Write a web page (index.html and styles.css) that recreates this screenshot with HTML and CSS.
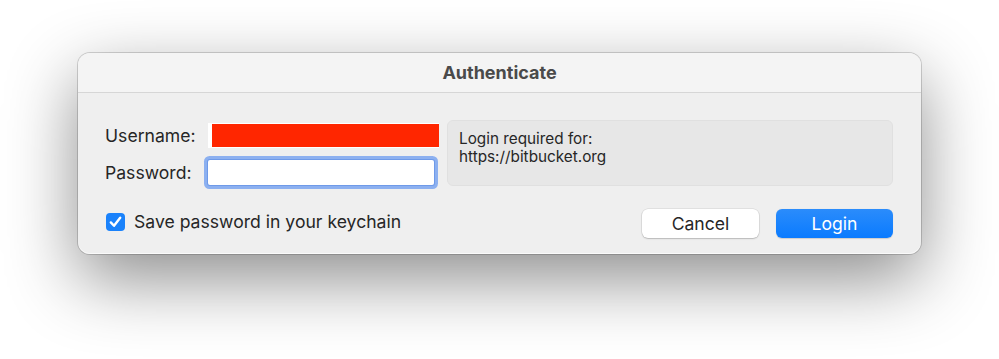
FILE: index.html
```html
<!DOCTYPE html>
<html>
<head>
<meta charset="utf-8">
<link rel="stylesheet" href="styles.css">
</head>
<body>
<div class="window">
  <div class="titlebar">Authenticate</div>
  <div class="content">
    <div class="top">
      <div class="form">
        <label class="label">Username:</label>
        <div class="field username"><div class="redact"></div></div>
        <label class="label">Password:</label>
        <div class="field password"></div>
      </div>
      <div class="info">
        <div>Login required for:</div>
        <div>https://bitbucket.org</div>
      </div>
    </div>
    <div class="bottom">
      <div class="check">
        <span class="box"><svg width="19" height="18" viewBox="0 0 19 18"><path d="M4.8 9.4 L8 12.8 L14.2 4.8" fill="none" stroke="#fff" stroke-width="2.4" stroke-linecap="round" stroke-linejoin="round"/></svg></span>
        <span class="check-text">Save password in your keychain</span>
      </div>
      <div class="buttons">
        <button class="btn cancel">Cancel</button>
        <button class="btn login">Login</button>
      </div>
    </div>
  </div>
</div>
</body>
</html>
```
FILE: styles.css
```css
html, body {
  margin: 0;
  padding: 0;
  background: #ffffff;
}
body {
  font-family: Inter, "Liberation Sans", sans-serif;
  color: #262626;
  padding-top: 53px;
  min-height: 359px;
  box-sizing: border-box;
}
.window {
  width: 843px;
  height: 201px;
  margin: 0 auto;
  border-radius: 12px;
  background: #efefef;
  box-shadow: inset 0 -1px 0 rgba(255,255,255,0.7), 0 0 0 1px rgba(0,0,0,0.16), 0 25px 70px rgba(0,0,0,0.45);
  overflow: hidden;
  box-sizing: border-box;
}
.titlebar {
  height: 39px;
  border-bottom: 1px solid #d6d6d6;
  background: #f4f4f4;
  display: flex;
  align-items: center;
  justify-content: center;
  font-weight: 700;
  font-size: 18px;
  color: #4a4a4a;
}
.content {
  padding: 27px 28px 0 27px;
}
.top {
  display: flex;
  align-items: flex-start;
}
.form {
  display: grid;
  grid-template-columns: 103px 231px;
  grid-auto-rows: 25px;
  row-gap: 12px;
  margin-top: 3px;
  align-items: center;
}
.label {
  font-size: 17.6px;
  color: #262626;
}
.field {
  height: 25px;
  background: #fff;
  box-sizing: border-box;
}
.username {
  padding: 1px 0 1px 4px;
}
.redact {
  height: 100%;
  background: #ff2600;
}
.password {
  width: 226px;
  border-radius: 2px;
  box-shadow: 0 0 0 1px #6f9ae8, 0 0 0 4px #8cb0f0;
}
.info {
  flex: 1;
  margin-left: 8px;
  height: 66px;
  box-sizing: border-box;
  background: #e7e7e7;
  border: 1px solid #e0e0e0;
  border-radius: 6px;
  padding: 9px 11px;
  font-size: 15.3px;
  line-height: 18px;
  color: #262626;
}
.bottom {
  display: flex;
  justify-content: space-between;
  align-items: center;
  margin-top: 23px;
  padding-left: 1px;
}
.check {
  display: flex;
  align-items: center;
  margin-top: -4px;
}
.box {
  width: 19px;
  height: 18px;
  border-radius: 4px;
  background: #1a82fb;
  display: flex;
}
.check-text {
  margin-left: 9px;
  font-size: 17.6px;
  color: #262626;
}
.buttons {
  display: flex;
  gap: 17px;
}
.btn {
  width: 117px;
  height: 29px;
  border: none;
  border-radius: 6px;
  font-family: Inter, "Liberation Sans", sans-serif;
  font-size: 17.6px;
  padding: 0;
}
.cancel {
  background: #fff;
  color: #262626;
  box-shadow: 0 0 0 0.5px rgba(0,0,0,0.12), 0 1px 1.5px rgba(0,0,0,0.18);
}
.login {
  background: linear-gradient(#2b8cfb, #0a7bff);
  color: #fff;
  box-shadow: 0 0.5px 1px rgba(0,0,0,0.15);
}
```
